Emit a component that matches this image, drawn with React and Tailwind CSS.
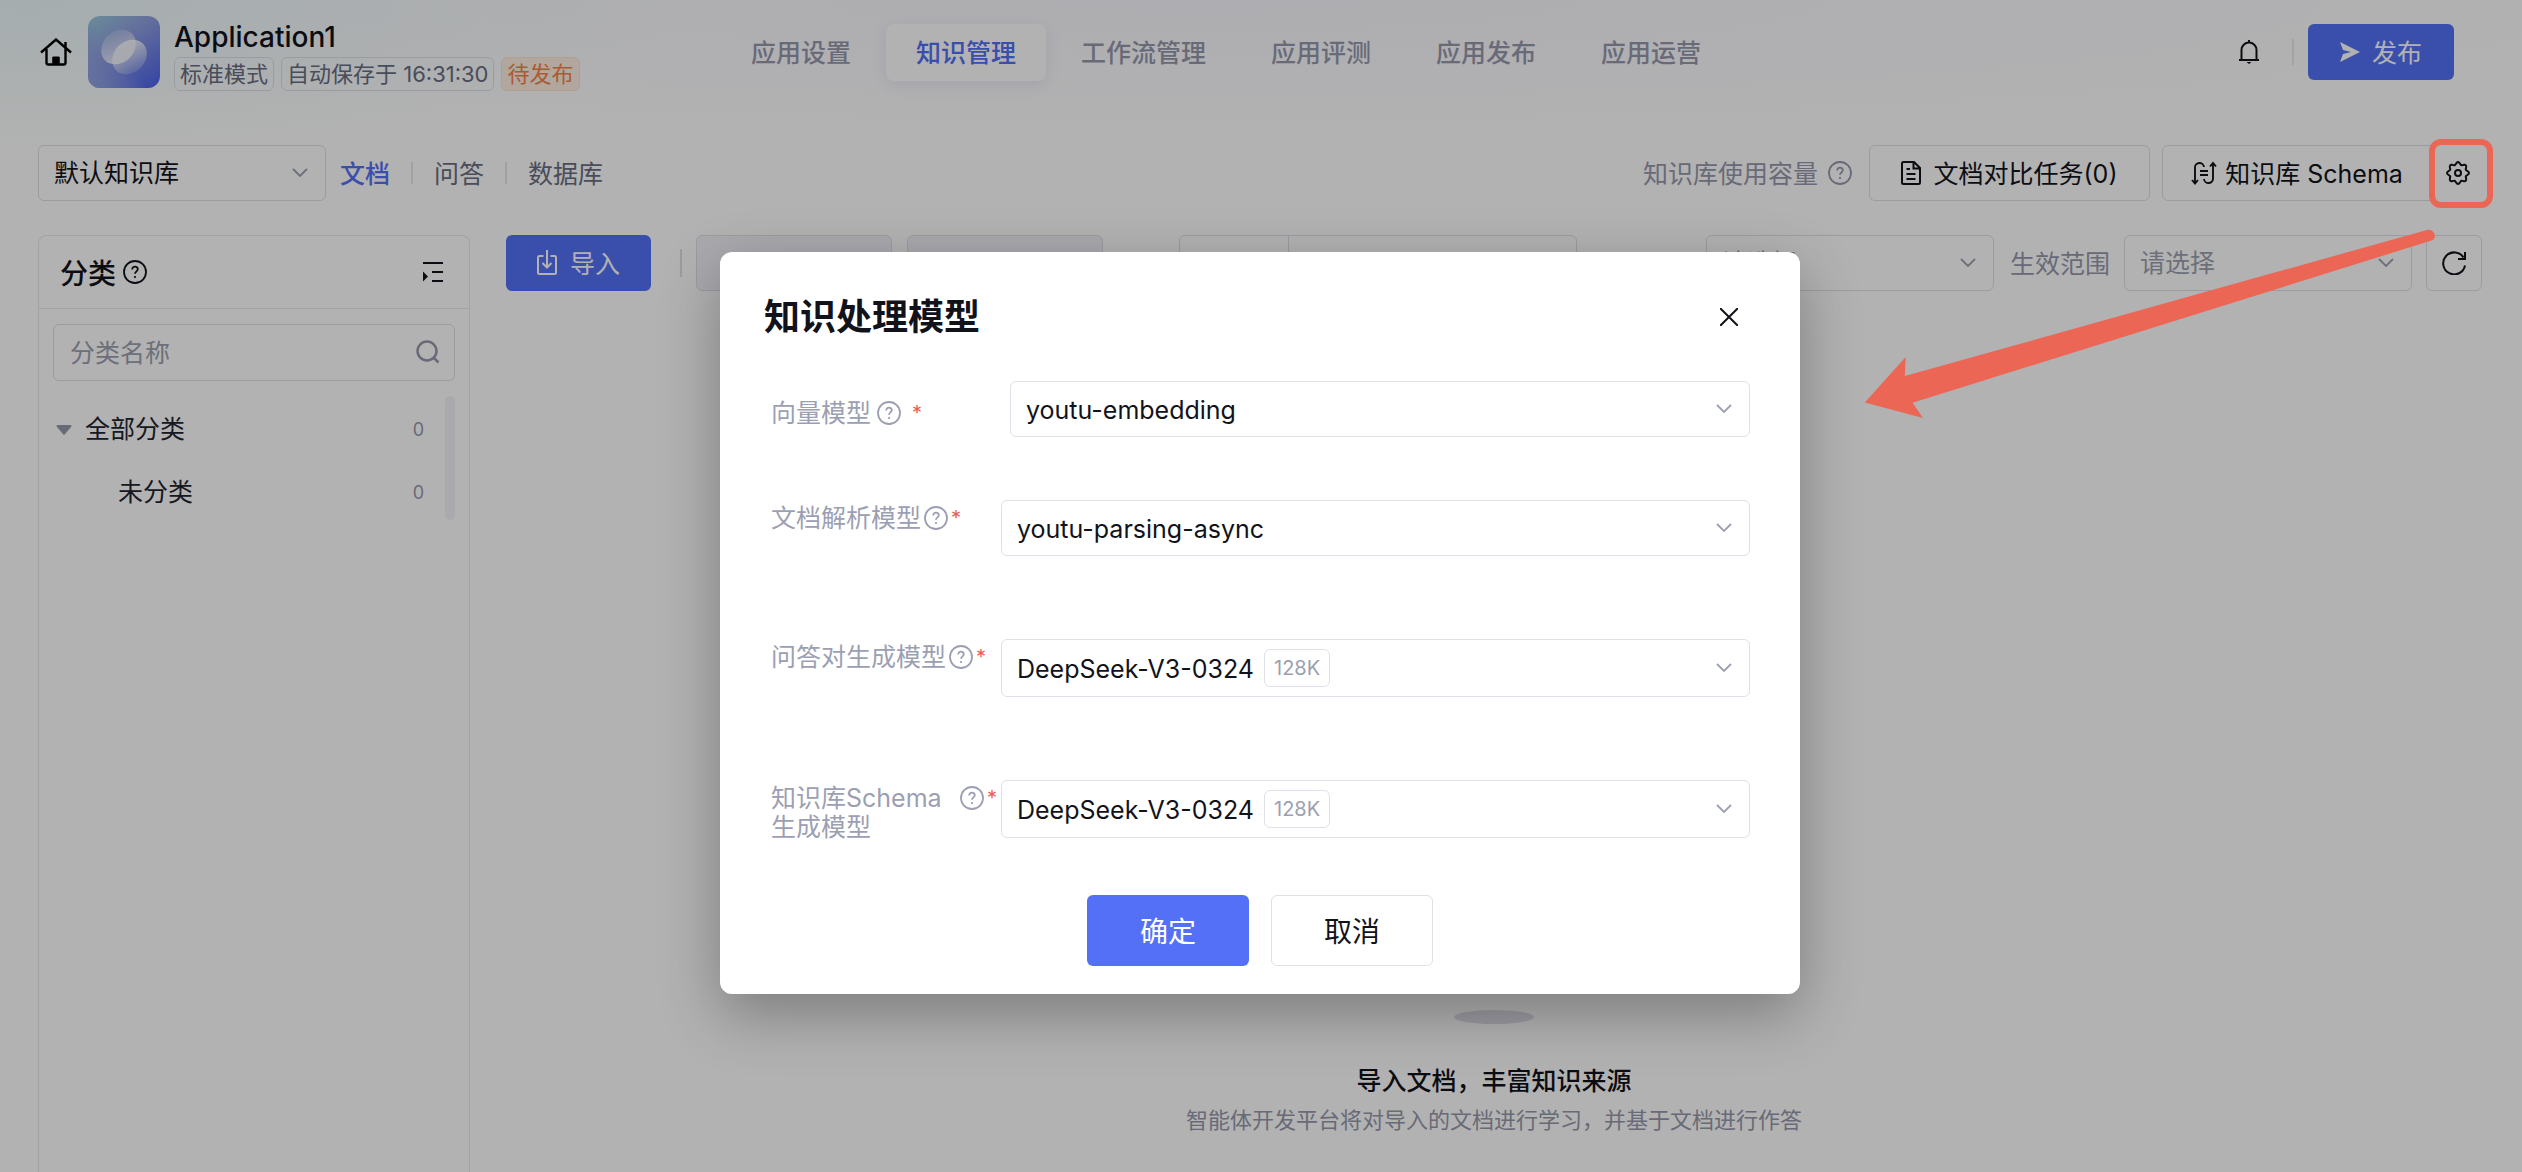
import { useState } from 'react';

const navItems = ['应用设置', '知识管理', '工作流管理', '应用评测', '应用发布', '应用运营'];
const tabs = ['文档', '问答', '数据库'];
const categories = [
  { name: '全部分类', count: 0, root: true },
  { name: '未分类', count: 0, root: false },
];

// Eight-lobed outline of the settings gear
const gearPoints = Array.from({ length: 120 }, (_, i) => {
  const a = (i / 120) * Math.PI * 2;
  const r = 9.7 + 1.2 * Math.cos(8 * a);
  return `${(12 + r * Math.sin(a)).toFixed(2)},${(12 - r * Math.cos(a)).toFixed(2)}`;
}).join(' ');

function HelpIcon({ className }) {
  return (
    <svg viewBox="0 0 24 24" className={`size-6 shrink-0 ${className}`} fill="none" stroke="currentColor" strokeWidth="1.8">
      <circle cx="12" cy="12" r="11" />
      <path d="M9.2 9.6c0-1.8 1.2-2.9 2.8-2.9s2.8 1.1 2.8 2.6c0 2-2.8 2.1-2.8 4.500" />
      <circle cx="12" cy="17" r="0.7" fill="currentColor" strokeWidth="1" />
    </svg>
  );
}

function Chevron() {
  return (
    <svg viewBox="0 0 16 10" className="pointer-events-none absolute top-1/2 right-[18px] h-[10px] w-4 -translate-y-1/2 text-[#9c9fb0]" fill="none" stroke="currentColor" strokeWidth="1.8">
      <path d="M1 1l7 7 7-7" />
    </svg>
  );
}

function Select({ id, label, value, badge, className, muted }) {
  return (
    <div className={`relative ${className}`}>
      <select
        id={id}
        aria-label={label}
        className={`size-full appearance-none rounded-md border border-[#dfe0e8] bg-transparent pt-0.5 pr-12 pl-[15px] ${muted ? 'text-[#9c9fb0]' : 'text-[#12131a]'}`}
      >
        <option>{value}</option>
      </select>
      {badge && (
        <span className="pointer-events-none absolute top-1/2 left-[263px] flex h-[38px] -translate-y-1/2 items-center rounded-md border border-[#dfe0e8] px-[9px] text-xl text-[#9c9fb0]">
          {badge}
        </span>
      )}
      <Chevron />
    </div>
  );
}

function Logo() {
  return (
    <svg viewBox="0 0 72 72" className="ml-4 size-[72px] shrink-0 rounded-xl">
      <defs>
        <linearGradient id="tile" x1="0.1" y1="0" x2="0.8" y2="1">
          <stop offset="0" stopColor="#98c6de" />
          <stop offset="0.4" stopColor="#8f9ee0" />
          <stop offset="1" stopColor="#5468ea" />
        </linearGradient>
        <linearGradient id="corner" x1="0" y1="1" x2="0.5" y2="0.6">
          <stop offset="0" stopColor="#93a6e2" />
          <stop offset="1" stopColor="#93a6e2" stopOpacity="0" />
        </linearGradient>
        <linearGradient id="ringA" x1="0.2" y1="1" x2="0.7" y2="0">
          <stop offset="0" stopColor="#fff" stopOpacity="0.9" />
          <stop offset="1" stopColor="#fff" stopOpacity="0.15" />
        </linearGradient>
        <linearGradient id="ringB" x1="0.8" y1="0" x2="0.3" y2="1">
          <stop offset="0" stopColor="#fff" stopOpacity="0.9" />
          <stop offset="1" stopColor="#fff" stopOpacity="0.15" />
        </linearGradient>
      </defs>
      <rect width="72" height="72" fill="url(#tile)" />
      <rect width="72" height="72" fill="url(#corner)" />
      <ellipse cx="30.5" cy="31" rx="19" ry="15.5" transform="rotate(-45 30.5 31)" fill="url(#ringA)" />
      <ellipse cx="41.5" cy="41" rx="19" ry="15.5" transform="rotate(-45 41.5 41)" fill="url(#ringB)" />
    </svg>
  );
}

function Header() {
  const [active, setActive] = useState('知识管理');

  return (
    <header className="flex h-[104px] shrink-0 items-center pr-[68px] pl-10">
      <div className="flex w-[681px] shrink-0 items-center">
        <a href="#" aria-label="首页">
          <svg viewBox="0 0 32 28" className="h-7 w-8 text-black" fill="none" stroke="currentColor" strokeWidth="2.4">
            <path d="M1 14.5L16 1.5l15 13M6.500 11v14a1.500 1.500 0 0 0 1.500 1.500h16a1.500 1.500 0 0 0 1.500-1.500V4" />
            <path d="M12.800 26.500V19h6.400v7.500z" fill="currentColor" strokeWidth="1" />
          </svg>
        </a>
        <Logo />
        <div className="ml-[14px] flex flex-col pt-[3px]">
          <h1 className="text-[28px] leading-10 font-medium">Application1</h1>
          <div className="flex gap-[7px] text-[22px] leading-8 text-[#696e82]">
            <span className="rounded-md border border-[#dfe0e8] px-[5px]">标准模式</span>
            <span className="rounded-md border border-[#dfe0e8] px-[5px]">自动保存于 16:31:30</span>
            <span className="rounded-md border border-[#fde2cd] bg-[#fef0e4] px-[5px] text-[#f58249]">待发布</span>
          </div>
        </div>
      </div>

      <nav className="flex flex-1 gap-[5px]">
        {navItems.map((item) => (
          <button
            key={item}
            type="button"
            onClick={() => setActive(item)}
            className={`h-[57px] rounded-lg px-[30px] pt-[3px] font-medium ${active === item ? 'bg-white text-[#5470f7] shadow-[0_4px_16px_rgba(90,90,160,0.12)]' : 'text-[#9699ac]'}`}
          >
            {item}
          </button>
        ))}
      </nav>

      <div className="flex items-center">
        <button type="button" aria-label="通知">
          <svg viewBox="0 0 22 24" className="h-6 w-[22px]" fill="none" stroke="currentColor" strokeWidth="2">
            <path d="M11 0v2M1 20h20M3.500 20V10a7.500 7.500 0 0 1 15 0v10" />
            <path d="M8.500 22h5l-2.500 2z" fill="currentColor" stroke="none" />
          </svg>
        </button>
        <span className="mr-[14px] ml-8 h-[26px] w-0.5 bg-[#e9eaf0]" />
        <button type="button" className="flex h-14 w-[146px] items-center justify-center gap-3 rounded-md bg-[#5470f7] text-white">
          <svg viewBox="0 0 20 20" className="size-5" fill="currentColor">
            <path d="M0 0l20 10L0 20l3-8 8-2-8-2z" />
          </svg>
          <span className="pt-[3px]">发布</span>
        </button>
      </div>
    </header>
  );
}

function Toolbar() {
  const [tab, setTab] = useState('文档');

  return (
    <div className="mt-[41px] flex h-14 shrink-0 items-center pr-[39px] pl-[38px]">
      <Select label="知识库" value="默认知识库" className="h-14 w-[288px]" />
      <div className="ml-[14px] flex items-center">
        {tabs.map((item, i) => (
          <div key={item} className="flex items-center">
            {i > 0 && <span className="mx-[21px] h-[22px] w-[2px] bg-[#e6e7ed]" />}
            <button
              type="button"
              onClick={() => setTab(item)}
              className={`pt-[3px] ${tab === item ? 'font-medium text-[#5470f7]' : 'text-[#696e82]'}`}
            >
              {item}
            </button>
          </div>
        ))}
      </div>

      <div className="ml-auto flex items-center">
        <span className="pt-[3px] text-[#9699ac]">知识库使用容量</span>
        <HelpIcon className="mr-[17px] ml-[10px] text-[#9699ac]" />
        <button type="button" className="flex h-14 w-[281px] items-center justify-center gap-3 rounded-md border border-[#dfe0e8]">
          <svg viewBox="0 0 20 24" className="h-6 w-5 shrink-0" fill="none" stroke="currentColor" strokeWidth="2">
            <path d="M1 2.500A1.500 1.500 0 0 1 2.500 1H13l6 6v14.500a1.500 1.500 0 0 1-1.500 1.500h-15A1.500 1.500 0 0 1 1 21.500zM12.500 1v6.500H19M5.500 8H9M5.500 13h9M5.500 18h9" />
          </svg>
          <span className="pt-[3px]">文档对比任务(0)</span>
        </button>
        <button type="button" className="ml-3 flex h-14 w-[270px] items-center justify-center gap-2 rounded-l-md border border-[#dfe0e8]">
          <svg viewBox="0 0 26 24" className="h-6 w-[26px] shrink-0" fill="none" stroke="currentColor" strokeWidth="1.9">
            <path d="M4 22V7a4.500 4.500 0 0 1 9-1M1 19l3 3.500L7 19M22 2v15a4.500 4.500 0 0 1-9 1M19 5.500L22 2l3 3.500M9 10h8M9 14h8" />
          </svg>
          <span className="pt-[3px]">知识库 Schema</span>
        </button>
        <button type="button" aria-label="设置" className="flex h-14 w-[51px] items-center justify-center">
          <svg viewBox="0 0 24 24" className="size-6" fill="none" stroke="currentColor" strokeWidth="2">
            <polygon points={gearPoints} />
            <circle cx="12" cy="12" r="3" />
          </svg>
        </button>
      </div>
    </div>
  );
}

function Sidebar() {
  return (
    <aside className="w-[432px] shrink-0 rounded-t-lg border border-b-0 border-[#e9eaf0]">
      <div className="flex h-[73px] items-center border-b border-[#e9eaf0] pr-[26px] pl-[21px]">
        <h2 className="pt-[3px] text-[28px] font-medium">分类</h2>
        <HelpIcon className="ml-[7px]" />
        <button type="button" aria-label="收起" className="ml-auto">
          <svg viewBox="0 0 20 20" className="size-5" fill="none" stroke="currentColor" strokeWidth="2">
            <path d="M0 1h20M9 10h11M9 19h11" />
            <path d="M0 9.500l5 5-5 5z" fill="currentColor" stroke="none" />
          </svg>
        </button>
      </div>
      <div className="px-[14px] pt-[15px]">
        <div className="relative">
          <input
            type="text"
            aria-label="分类名称"
            placeholder="分类名称"
            className="h-[57px] w-full rounded-md border border-[#dfe0e8] pr-14 pl-4 placeholder:text-[#9c9fb0]"
          />
          <svg viewBox="0 0 24 24" className="absolute top-4 right-[15px] size-6 text-[#9699ac]" fill="none" stroke="currentColor" strokeWidth="2.500">
            <circle cx="11" cy="11" r="9.500" />
            <path d="M17.500 17.500l5 5" />
          </svg>
        </div>
        <div className="mt-[15px] flex">
          <ul className="flex-1 pt-0.5">
            {categories.map(({ name, count, root }) => (
              <li key={name} className={`flex h-[63px] items-center pr-[21px] text-[#22242f] ${root ? 'pl-[3px]' : 'pl-[65px]'}`}>
                {root && (
                  <svg viewBox="0 0 16 10" className="mr-[13px] h-[10px] w-4 text-[#9699ac]" fill="currentColor">
                    <path d="M1.500 0h13a1 1 0 0 1 .7 1.700l-6.300 7.600a1.200 1.200 0 0 1-1.800 0L.8 1.700A1 1 0 0 1 1.500 0z" />
                  </svg>
                )}
                {name}
                <span className="ml-auto text-lg text-[#9699ac]">{count}</span>
              </li>
            ))}
          </ul>
          <div className="h-[124px] w-[10px] rounded-full bg-[#f4f4fa]" />
        </div>
      </div>
    </aside>
  );
}

function Documents() {
  return (
    <main className="ml-9 flex flex-1 flex-col">
      <div className="flex h-14 items-center">
        <button type="button" className="flex h-14 w-[145px] items-center justify-center gap-[13px] rounded-md bg-[#5470f7] text-white">
          <svg viewBox="0 0 20 26" className="h-[26px] w-5" fill="none" stroke="currentColor" strokeWidth="2">
            <path d="M6.500 6H2.500A1.500 1.500 0 0 0 1 7.500v15A1.500 1.500 0 0 0 2.500 24h15a1.500 1.500 0 0 0 1.500-1.500v-15A1.500 1.500 0 0 0 17.500 6h-4M10 0v17M5.500 13l4.500 4.500 4.500-4.500" />
          </svg>
          <span className="pt-[3px]">导入</span>
        </button>
        <span className="mr-[14px] ml-[29px] h-7 w-[2px] bg-[#dfe0e8]" />
        <button type="button" aria-label="批量操作" disabled className="h-14 w-[196px] rounded-md border border-[#dfe0e8] bg-[#f3f3fa]" />
        <button type="button" aria-label="批量导出" disabled className="ml-[15px] h-14 w-[196px] rounded-md border border-[#dfe0e8] bg-[#f3f3fa]" />
        <div className="ml-auto flex items-center">
          <div className="flex h-14 w-[398px] rounded-md border border-[#dfe0e8]">
            <div className="w-[109px] border-r border-[#dfe0e8]" />
            <input type="text" aria-label="搜索文档" className="min-w-0 flex-1" />
          </div>
          <Select label="文档状态" value="请选择" muted className="ml-[129px] h-14 w-[288px]" />
          <label htmlFor="scope" className="mr-[14px] ml-4 pt-[3px] text-[#9699ac]">生效范围</label>
          <Select id="scope" value="请选择" muted className="h-14 w-[288px]" />
          <button type="button" aria-label="刷新" className="ml-[14px] flex size-14 items-center justify-center rounded-md border border-[#dfe0e8]">
            <svg viewBox="0 0 24 24" className="size-6" fill="none" stroke="currentColor" strokeWidth="2">
              <path d="M23 14.500A11 11 0 1 1 21.500 6.500M23 1v7h-7" />
            </svg>
          </button>
        </div>
      </div>

      <div className="flex flex-1 flex-col items-center justify-end pb-9">
        <svg viewBox="0 0 80 14" className="h-[14px] w-20">
          <ellipse cx="40" cy="7" rx="40" ry="7" fill="#dfdee8" />
        </svg>
        <p className="mt-[39px] leading-9 font-medium">导入文档，丰富知识来源</p>
        <p className="mt-[5px] text-[22px] leading-8 text-[#9699ac]">智能体开发平台将对导入的文档进行学习，并基于文档进行作答</p>
      </div>
    </main>
  );
}

function Required() {
  return <span className="text-xl leading-[29px] text-[#ec5b56]">*</span>;
}

function ModelDialog() {
  return (
    <div role="dialog" aria-label="知识处理模型" className="w-[1080px] rounded-xl bg-white px-11 pb-7 shadow-[0_20px_60px_rgba(0,0,0,0.3)]">
      <div className="flex h-[129px] items-center justify-between pr-[18px]">
        <h2 className="text-4xl font-semibold">知识处理模型</h2>
        <button type="button" aria-label="关闭">
          <svg viewBox="0 0 18 18" className="size-[18px]" fill="none" stroke="currentColor" strokeWidth="2">
            <path d="M0 0l18 18M18 0L0 18" />
          </svg>
        </button>
      </div>

      <div className="flex flex-col pr-1.5 pl-[7px] leading-[29px]">
        <div className="flex">
          <label htmlFor="embedding" className="flex w-[239px] items-center pt-2 text-[#9c9fb2]">
            向量模型
            <HelpIcon className="mr-[11px] ml-1.5" />
            <Required />
          </label>
          <Select id="embedding" value="youtu-embedding" className="h-14 flex-1" />
        </div>
        <div className="mt-[63px] flex">
          <label htmlFor="parsing" className="flex w-[230px] items-start pt-1 text-[#9c9fb2]">
            文档解析模型
            <HelpIcon className="mx-[3px] mt-[2px]" />
            <Required />
          </label>
          <Select id="parsing" value="youtu-parsing-async" className="h-14 flex-1" />
        </div>
        <div className="mt-[83px] flex">
          <label htmlFor="qa" className="flex w-[230px] items-start pt-1 text-[#9c9fb2]">
            问答对生成模型
            <HelpIcon className="mx-[3px] mt-[2px]" />
            <Required />
          </label>
          <Select id="qa" value="DeepSeek-V3-0324" badge="128K" className="h-[58px] flex-1" />
        </div>
        <div className="mt-[83px] flex">
          <label htmlFor="schema" className="flex w-[230px] items-start pt-1 text-[#9c9fb2]">
            <span className="w-[186px]">知识库Schema<br />生成模型</span>
            <HelpIcon className="mx-[3px] mt-[2px]" />
            <Required />
          </label>
          <Select id="schema" value="DeepSeek-V3-0324" badge="128K" className="h-[58px] flex-1" />
        </div>
      </div>

      <div className="mt-[53px] flex justify-center gap-[22px] text-[28px]">
        <button type="button" className="h-[71px] w-[162px] rounded-md bg-[#5470f7] pt-0.5 text-white">确定</button>
        <button type="button" className="h-[71px] w-[162px] rounded-md border border-[#dfe0e8] pt-0.5">取消</button>
      </div>
    </div>
  );
}

export default function App() {
  return (
    <div className="relative flex min-h-screen flex-col overflow-hidden bg-white bg-[radial-gradient(700px_150px_at_0_0,#edf8fa,transparent),radial-gradient(1500px_130px_at_1200px_0,#f9f8fe,transparent)] [font-family:Inter,'Noto_Sans_CJK_SC',sans-serif] text-[25px] text-[#12131a]">
      <Header />
      <Toolbar />
      <div className="mt-[34px] flex flex-1 pr-10 pl-[38px]">
        <Sidebar />
        <Documents />
      </div>

      <div className="absolute inset-0 flex items-start justify-center bg-black/30 pt-[252px] pr-0.5">
        <ModelDialog />

        {/* Callout from the settings button to the dialog */}
        <div className="pointer-events-none absolute top-[139px] right-[29px] h-[69px] w-[64px] rounded-xl border-6 border-[#ec6655]" />
        <svg viewBox="0 0 572 192" className="pointer-events-none absolute top-[228px] right-[86px] h-48 w-[572px]" fill="#ec6655">
          <path d="M0.800 174.500L41.700 129l-.9 19L563 2c5-1.500 9 4 7.600 8-.5 1-1.500 2-3 2.500L48.600 174.700 59 190z" />
        </svg>
      </div>
    </div>
  );
}
